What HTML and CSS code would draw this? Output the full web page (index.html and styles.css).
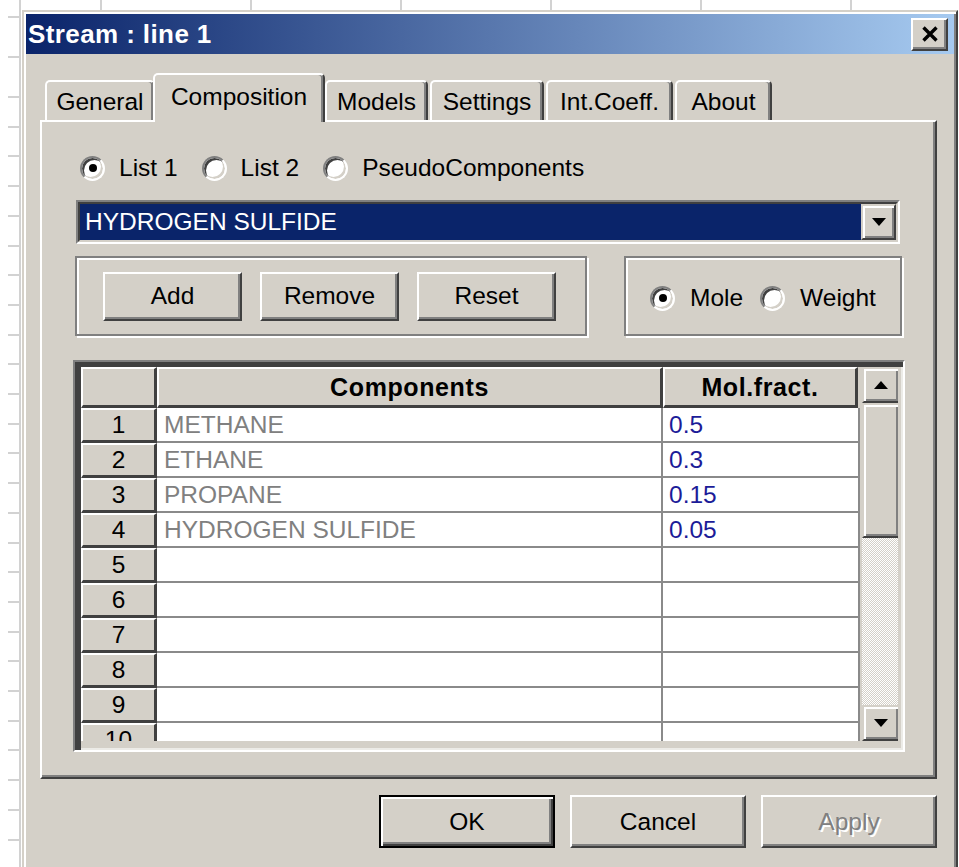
FILE: index.html
```html
<!DOCTYPE html>
<html lang="en">
<head>
<meta charset="utf-8">
<title>Stream : line 1</title>
<link rel="stylesheet" href="styles.css">
</head>
<body>
<div class="ruler"></div>
<div class="dialog">
  <div class="titlebar">
    <span class="title">Stream : line 1</span>
    <button class="close" aria-label="Close">
      <svg width="18" height="16" viewBox="0 0 18 16"><path d="M2.5 1.5L15.5 14.5M15.5 1.5L2.5 14.5" stroke="#000" stroke-width="3.4" fill="none"/></svg>
    </button>
  </div>
  <div class="dlg-body">
    <div class="tabs">
      <div class="tab t-general">General</div>
      <div class="tab active t-comp">Composition</div>
      <div class="tab t-models">Models</div>
      <div class="tab t-settings">Settings</div>
      <div class="tab t-coeff">Int.Coeff.</div>
      <div class="tab t-about">About</div>
    </div>
    <div class="panel">
      <div class="radio-row">
        <label class="opt"><span class="radio on"></span>List 1</label>
        <label class="opt"><span class="radio"></span>List 2</label>
        <label class="opt"><span class="radio"></span>PseudoComponents</label>
      </div>
      <div class="combo">
        <div class="combo-inner">
          <div class="combo-value">HYDROGEN SULFIDE</div>
          <div class="raised combo-btn">
            <svg width="14" height="8" viewBox="0 0 14 8"><path d="M0 0H14L7 8Z" fill="#000"/></svg>
          </div>
        </div>
      </div>
      <div class="group-row">
        <div class="group group-actions">
          <button class="btn">Add</button>
          <button class="btn">Remove</button>
          <button class="btn">Reset</button>
        </div>
        <div class="group group-basis">
          <label class="opt"><span class="radio on"></span>Mole</label>
          <label class="opt"><span class="radio"></span>Weight</label>
        </div>
      </div>
      <div class="grid">
        <div class="grid-inner">
          <div class="table">
            <div class="row head">
              <div class="hcell rh"></div>
              <div class="hcell c1">Components</div>
              <div class="hcell c2">Mol.fract.</div>
            </div>
            <div class="row"><div class="hcell rh">1</div><div class="cell c1 name">METHANE</div><div class="cell c2 val">0.5</div></div>
            <div class="row"><div class="hcell rh">2</div><div class="cell c1 name">ETHANE</div><div class="cell c2 val">0.3</div></div>
            <div class="row"><div class="hcell rh">3</div><div class="cell c1 name">PROPANE</div><div class="cell c2 val">0.15</div></div>
            <div class="row"><div class="hcell rh">4</div><div class="cell c1 name">HYDROGEN SULFIDE</div><div class="cell c2 val">0.05</div></div>
            <div class="row"><div class="hcell rh">5</div><div class="cell c1"></div><div class="cell c2"></div></div>
            <div class="row"><div class="hcell rh">6</div><div class="cell c1"></div><div class="cell c2"></div></div>
            <div class="row"><div class="hcell rh">7</div><div class="cell c1"></div><div class="cell c2"></div></div>
            <div class="row"><div class="hcell rh">8</div><div class="cell c1"></div><div class="cell c2"></div></div>
            <div class="row"><div class="hcell rh">9</div><div class="cell c1"></div><div class="cell c2"></div></div>
            <div class="row"><div class="hcell rh">10</div><div class="cell c1"></div><div class="cell c2"></div></div>
          </div>
          <div class="vscroll">
            <div class="raised sb-btn">
              <svg width="14" height="8" viewBox="0 0 14 8"><path d="M0 8H14L7 0Z" fill="#000"/></svg>
            </div>
            <div class="raised sb-thumb"></div>
            <div class="sb-track"></div>
            <div class="raised sb-btn">
              <svg width="14" height="8" viewBox="0 0 14 8"><path d="M0 0H14L7 8Z" fill="#000"/></svg>
            </div>
          </div>
        </div>
      </div>
    </div>
    <div class="footer">
      <button class="btn big default">OK</button>
      <button class="btn big">Cancel</button>
      <button class="btn big disabled">Apply</button>
    </div>
  </div>
</div>
</body>
</html>
```

FILE: styles.css
```css
* { box-sizing: border-box; }

html, body { margin: 0; }

body {
  width: 959px;
  height: 867px;
  overflow: hidden;
  display: flex;
  align-items: flex-start;
  background-color: #fff;
  /* spreadsheet column lines behind the dialog */
  background-image: linear-gradient(to right, #d2d2d2 0 2px, transparent 2px);
  background-size: 150px 100%;
  background-position: 100px 0;
  font-family: "Liberation Sans", Arial, sans-serif;
  font-size: 24.5px;
  color: #000;
}

/* row tick marks along the left edge */
.ruler {
  flex: none;
  width: 22px;
  height: 867px;
  background-color: #fff;
  background-image:
    linear-gradient(to right, transparent 19px, #d2d2d2 19px 21px, transparent 21px),
    linear-gradient(#d2d2d2, #d2d2d2),
    linear-gradient(#d2d2d2, #d2d2d2),
    repeating-linear-gradient(to bottom, #d2d2d2 0 2px, transparent 2px 29.7px);
  background-size: 100% 100%, 12px 2px, 12px 2px, 12px 800px;
  background-position: 0 0, 8px 16px, 8px 56px, 8px 96px;
  background-repeat: no-repeat;
}

.dialog {
  flex: none;
  margin-top: 10px;
  width: 936px;
  height: 880px;
  display: flex;
  flex-direction: column;
  background: #d4d0c8;
  border: 2px solid;
  border-color: #d4d0c8 #404040 #404040 #d4d0c8;
  box-shadow: inset 2px 2px #fff, inset -2px -2px #808080;
  padding: 2px;
}

/* ---------- title bar ---------- */
.titlebar {
  flex: none;
  height: 40px;
  display: flex;
  align-items: center;
  justify-content: space-between;
  padding: 0 6px 0 2px;
  background: linear-gradient(to right, #0a246a, #a6caf0);
}

.title {
  color: #fff;
  font-weight: bold;
  font-size: 26px;
  letter-spacing: 0.4px;
}

.close {
  width: 37px;
  height: 33px;
  padding: 0;
  display: flex;
  align-items: center;
  justify-content: center;
  background: #d4d0c8;
  border: 2px solid;
  border-color: #fff #404040 #404040 #fff;
  box-shadow: inset -2px -2px #808080;
}

/* ---------- body ---------- */
.dlg-body {
  padding: 19px 17px 0 14px;
}

.tabs {
  height: 47px;
  display: flex;
  align-items: flex-end;
  position: relative;
  z-index: 1;
}

.tab {
  flex: none;
  height: 40px;
  margin-left: 2px;
  display: flex;
  align-items: center;
  justify-content: center;
  padding-top: 1px;
  background: #d4d0c8;
  border: 2px solid;
  border-bottom: none;
  border-color: #fff #404040 transparent #fff;
  border-radius: 5px 5px 0 0;
  box-shadow: inset -2px 0 #808080;
}

.tab.active {
  height: 49px;
  margin-bottom: -2px;
  padding-bottom: 4px;
}

.t-general { width: 110px; margin-left: 5px; }
.t-comp { width: 172px; margin-left: -2px; }
.t-models { width: 103px; margin-left: 0; }
.t-settings { width: 114px; }
.t-coeff { width: 127px; }
.t-about { width: 97px; }

.panel {
  height: 659px;
  padding: 32px 30px 0 31px;
  border: 2px solid;
  border-color: #fff #404040 #404040 #fff;
  box-shadow: inset -2px -2px #808080;
}

/* ---------- radio options ---------- */
.radio-row {
  height: 28px;
  padding-left: 7px;
  display: flex;
  align-items: center;
}

.opt {
  display: flex;
  align-items: center;
  gap: 14px;
  margin-right: 24px;
  white-space: nowrap;
}

.radio {
  flex: none;
  position: relative;
  width: 25px;
  height: 25px;
  border-radius: 50%;
  background: #fff;
  border: 2px solid;
  border-color: #808080 #fff #fff #808080;
  box-shadow: inset 2px 2px #404040, inset -2px -2px #d4d0c8;
}

.radio.on::after {
  content: "";
  position: absolute;
  left: 50%;
  top: 50%;
  width: 8px;
  height: 8px;
  margin: -4px 0 0 -4px;
  border-radius: 50%;
  background: #000;
}

/* ---------- combo box ---------- */
.combo {
  margin: 18px 5px 0 3px;
  height: 44px;
  border: 2px solid;
  border-color: #808080 #fff #fff #808080;
}

.combo-inner {
  height: 100%;
  display: flex;
  border: 2px solid;
  border-color: #404040 #d4d0c8 #d4d0c8 #404040;
  background: #fff;
}

.combo-value {
  flex: 1;
  display: flex;
  align-items: center;
  padding-left: 5px;
  background: #0a246a;
  color: #fff;
}

.raised {
  background: #d4d0c8;
  border: 2px solid;
  border-color: #d4d0c8 #404040 #404040 #d4d0c8;
  box-shadow: inset 2px 2px #fff, inset -2px -2px #808080;
}

.combo-btn {
  flex: none;
  width: 35px;
  display: flex;
  align-items: center;
  justify-content: center;
}

/* ---------- group boxes ---------- */
.group-row {
  margin: 12px 3px 0 2px;
  display: flex;
  justify-content: space-between;
}

.group {
  height: 80px;
  border: 2px solid #808080;
  box-shadow: inset 2px 2px #fff, 2px 2px #fff;
  display: flex;
  align-items: center;
}

.group-actions {
  width: 512px;
  padding: 0 0 0 26px;
  gap: 18px;
}

.group-basis {
  width: 278px;
  padding-left: 24px;
  padding-top: 4px;
}

.group-basis .opt {
  gap: 15px;
  margin-right: 17px;
}

.btn {
  width: 139px;
  height: 49px;
  padding: 0;
  font: inherit;
  color: #000;
  background: #d4d0c8;
  border: 2px solid;
  border-color: #fff #404040 #404040 #fff;
  box-shadow: inset -2px -2px #808080;
}

.btn.big {
  width: 176px;
  height: 53px;
}

.btn.default {
  border-color: #000;
  box-shadow: inset 2px 2px #fff, inset -2px -2px #404040, inset -4px -4px #808080;
}

.btn.disabled {
  color: #808080;
  text-shadow: 2px 2px 0 #fff;
}

/* ---------- grid ---------- */
.grid {
  margin-top: 24px;
  height: 392px;
  border: 2px solid;
  border-color: #808080 #fff #fff #808080;
  background: #d4d0c8;
  box-shadow: inset 6px 5px #404040, inset -2px -2px #ecebe7;
  padding: 5px 5px 9px 6px;
}

.grid-inner {
  height: 374px;
  display: flex;
  overflow: hidden;
}

.table {
  width: 779px;
  flex: none;
  overflow: hidden;
}

.row {
  display: flex;
  height: 35px;
}

.row.head {
  height: 41px;
}

.rh { width: 76px; }
.c1 { width: 506px; }
.c2 { width: 197px; }

.hcell {
  flex: none;
  display: flex;
  align-items: center;
  justify-content: center;
  background: #d4d0c8;
  border-style: solid;
  border-width: 2px 3px 3px 2px;
  border-color: #fff #404040 #404040 #fff;
}

.head .hcell {
  font-weight: bold;
  font-size: 25px;
  letter-spacing: 0.6px;
  padding-top: 1px;
}

.head .c2 {
  width: 195px;
}

.cell {
  flex: none;
  display: flex;
  align-items: center;
  background: #fff;
  border-right: 2px solid #8a8a8a;
  border-bottom: 2px solid #8a8a8a;
  white-space: nowrap;
}

.name {
  padding-left: 7px;
  color: #808080;
}

.val {
  padding-left: 6px;
  color: #1c1c98;
}

.vscroll {
  flex: none;
  width: 38px;
  margin-left: 2px;
  display: flex;
  flex-direction: column;
}

.sb-btn {
  height: 36px;
  display: flex;
  align-items: center;
  justify-content: center;
}

.sb-thumb {
  height: 135px;
}

.sb-track {
  flex: 1;
  background-image: repeating-conic-gradient(#d4d0c8 0 25%, #fff 0 50%);
  background-size: 2px 2px;
}

/* ---------- footer buttons ---------- */
.footer {
  padding-top: 16px;
  display: flex;
  justify-content: flex-end;
  gap: 15px;
}
```
